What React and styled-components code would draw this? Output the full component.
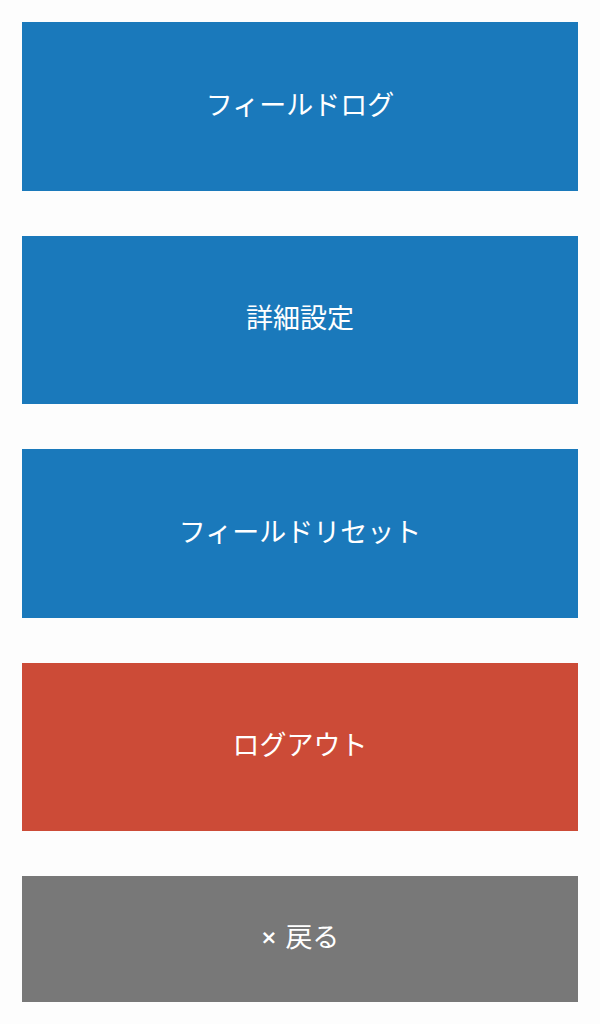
import React from "react";
import styled, { createGlobalStyle } from "styled-components";

const Global = createGlobalStyle`
  html, body { margin: 0; padding: 0; background: #fdfdfd; }
  body { font-family: "Noto Sans CJK JP", "Noto Sans", sans-serif; }
`;

const Menu = styled.div`
  display: flex;
  flex-direction: column;
  gap: 45px;
  padding: 22px;
`;

const COLORS = { blue: "#1a79bb", red: "#cc4b37", gray: "#787878" };

const Button = styled.button`
  display: flex;
  align-items: center;
  justify-content: center;
  width: 100%;
  height: ${(p) => (p.$short ? "126px" : "168.5px")};
  border: none;
  margin: 0;
  padding: 0 0 5px;
  background: ${(p) => COLORS[p.$tone]};
  color: #ffffff;
  font-family: "Noto Sans CJK JP", "Noto Sans", sans-serif;
  font-size: 27px;
  line-height: 1.2;
  font-weight: 400;
  cursor: pointer;
`;

const Times = styled.span`
  font-family: "DejaVu Sans", sans-serif;
  font-size: 20px;
  font-weight: 700;
  margin-right: 8px;
`;

export default function App() {
  return (
    <>
      <Global />
      <Menu>
        <Button $tone="blue">フィールドログ</Button>
        <Button $tone="blue">詳細設定</Button>
        <Button $tone="blue">フィールドリセット</Button>
        <Button $tone="red">ログアウト</Button>
        <Button $tone="gray" $short>
          <Times>×</Times>戻る
        </Button>
      </Menu>
    </>
  );
}
